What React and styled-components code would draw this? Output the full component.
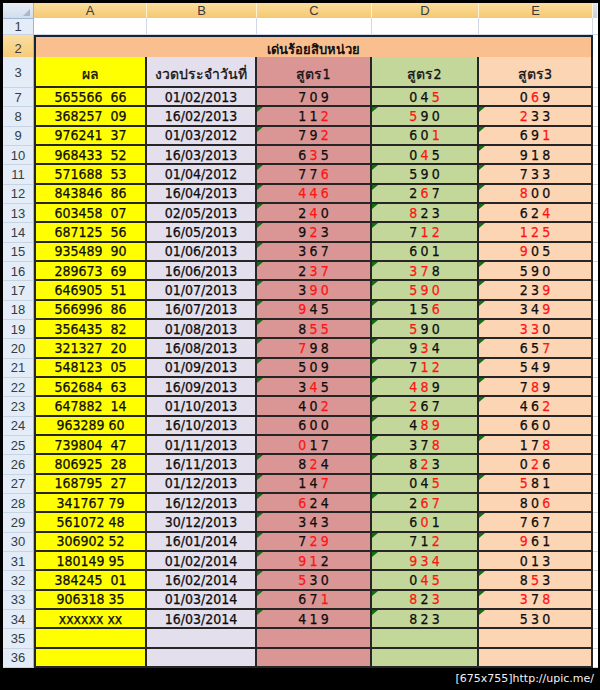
import React from "react";
import styled, { createGlobalStyle } from "styled-components";

const GlobalStyle = createGlobalStyle`
  html, body {
    margin: 0;
    padding: 0;
    background: #000;
  }
`;

const COLS = "31px 113px 110px 115px 107px 114px 5px";
const LINE = "#262626";

const colors = {
  a: "#ffff00",
  b: "#e4dfec",
  c: "#da9694",
  d: "#c4d79b",
  e: "#fcd5b4",
};

const Screen = styled.div`
  width: 600px;
  height: 690px;
  box-sizing: border-box;
  padding: 3px 2px 0 3px;
  background: #000;
  display: flex;
  flex-direction: column;
`;

const Sheet = styled.div`
  display: flex;
  flex-direction: column;
  background: #fff;
  font-family: "DejaVu Sans Condensed", "DejaVu Sans", sans-serif;
  color: #0d0d0d;
`;

const Row = styled.div`
  display: grid;
  grid-template-columns: ${COLS};
  height: ${({ $h }) => $h}px;
`;

const Corner = styled.div`
  position: relative;
  background: linear-gradient(#e6edf6, #d3deec);
  border-right: 1px solid #9eb6ce;
  border-bottom: 1px solid #9eb6ce;

  &::after {
    content: "";
    position: absolute;
    right: 3px;
    bottom: 2px;
    border-left: 7px solid transparent;
    border-bottom: 7px solid #a9b9cc;
  }
`;

const ColHead = styled.div`
  display: flex;
  align-items: center;
  justify-content: center;
  background: ${({ $off }) =>
    $off
      ? "linear-gradient(#dfe6ef, #c6d2e0)"
      : "linear-gradient(#fbdea0, #f5c870)"};
  border-right: 1px solid #fff1d2;
  border-bottom: 1px solid #e3a94b;
  font-family: "Liberation Sans", sans-serif;
  font-size: 13px;
  color: #3a3a3a;
`;

const RowHead = styled.div`
  display: flex;
  align-items: center;
  justify-content: center;
  background: ${({ $active }) =>
    $active ? "linear-gradient(#fbdea0, #f5c870)" : "#e4ecf7"};
  border-right: 1px solid #9eb6ce;
  border-bottom: 1px solid #c6d4e4;
  font-family: "Liberation Sans", sans-serif;
  font-size: 13px;
  color: #333c47;
  box-sizing: border-box;
`;

const Blank = styled.div`
  background: #fff;
  border-right: 1px solid #d0d7e5;
  border-bottom: 1px solid #d0d7e5;
`;

const Gutter = styled.div`
  background: #fff;
  border-bottom: 1px solid #d0d7e5;
`;

const Title = styled.div`
  grid-column: span 5;
  display: flex;
  align-items: center;
  justify-content: center;
  padding-top: 2px;
  box-sizing: border-box;
  background: #fabf8f;
  border: 2px solid #14243a;
  font-weight: bold;
  font-size: 13px;
  color: #111;
`;

const HeadCell = styled.div`
  display: flex;
  align-items: flex-end;
  justify-content: center;
  padding-bottom: 1px;
  box-sizing: border-box;
  background: ${({ $bg }) => $bg};
  border-right: 2px solid ${LINE};
  border-bottom: 2px solid ${LINE};
  border-left: ${({ $first }) => ($first ? `2px solid ${LINE}` : "none")};
  font-size: 14px;
  color: #111;
  -webkit-text-stroke: 0.3px #111;
`;

const Cell = styled.div`
  position: relative;
  display: flex;
  align-items: center;
  justify-content: center;
  box-sizing: border-box;
  background: ${({ $bg }) => $bg};
  border-right: 2px solid ${LINE};
  border-bottom: 2px solid ${LINE};
  border-left: ${({ $first }) => ($first ? `2px solid ${LINE}` : "none")};
  font-size: 14px;
  white-space: pre;
  -webkit-text-stroke: 0.25px currentColor;

  &::before {
    content: "";
    display: ${({ $flag }) => ($flag ? "block" : "none")};
    position: absolute;
    left: 0;
    top: 0;
    border-top: 5px solid #127012;
    border-right: 6px solid transparent;
  }
`;

const Digit = styled.span`
  margin: 0 1.6px;
  color: ${({ $red }) => ($red ? "#ff1414" : "#0d0d0d")};
`;

const Footer = styled.div`
  flex: 1;
  display: flex;
  align-items: center;
  justify-content: flex-end;
  padding-right: 4px;
  font-family: "DejaVu Sans", sans-serif;
  font-size: 11px;
  color: #f2f2f2;
`;

const rows = [
  [7, "565566  66", "01/02/2013", "709", "04*5", "0*69"],
  [8, "368257  09", "16/02/2013", "^11*2", "^*590", "^*233"],
  [9, "976241  37", "01/03/2012", "^79*2", "60*1", "^69*1"],
  [10, "968433  52", "16/03/2013", "6*35", "0*45", "^918"],
  [11, "571688  53", "01/04/2012", "^77*6", "^590", "^733"],
  [12, "843846  86", "16/04/2013", "^*4*4*6", "^2*67", "^*800"],
  [13, "603458  07", "02/05/2013", "^2*40", "^*823", "^62*4"],
  [14, "687125  56", "16/05/2013", "^9*23", "^7*1*2", "^*1*2*5"],
  [15, "935489  90", "01/06/2013", "^367", "601", "*905"],
  [16, "289673  69", "16/06/2013", "^2*3*7", "^*3*78", "^590"],
  [17, "646905  51", "01/07/2013", "^3*9*0", "^*5*9*0", "^23*9"],
  [18, "566996  86", "16/07/2013", "^*945", "^15*6", "^34*9"],
  [19, "356435  82", "01/08/2013", "^8*5*5", "^*590", "^*3*30"],
  [20, "321327  20", "16/08/2013", "^*798", "^9*34", "^65*7"],
  [21, "548123  05", "01/09/2013", "^509", "^7*1*2", "^549"],
  [22, "562684  63", "16/09/2013", "^3*45", "^*4*89", "^7*89"],
  [23, "647882  14", "01/10/2013", "40*2", "^*267", "^46*2"],
  [24, "963289 60", "16/10/2013", "600", "^4*8*9", "660"],
  [25, "739804  47", "01/11/2013", "*017", "^37*8", "^17*8"],
  [26, "806925  28", "16/11/2013", "^8*24", "^8*23", "0*26"],
  [27, "168795  27", "01/12/2013", "^14*7", "04*5", "^*581"],
  [28, "341767 79", "16/12/2013", "^*624", "^2*6*7", "80*6"],
  [29, "561072 48", "30/12/2013", "^343", "6*01", "^767"],
  [30, "306902 52", "16/01/2014", "^7*2*9", "^71*2", "^*961"],
  [31, "180149 95", "01/02/2014", "^*9*12", "^*9*3*4", "013"],
  [32, "384245  01", "16/02/2014", "^*530", "0*4*5", "^8*53"],
  [33, "906318 35", "01/03/2014", "^67*1", "^*82*3", "^*37*8"],
  [34, "xxxxxx xx", "16/03/2014", "^419", "^823", "^530"],
  [35, "", "", "", "", ""],
  [36, "", "", "", "", ""],
];

const parse = (code) => {
  const flag = code.startsWith("^");
  const digits = [];
  let red = false;
  for (const ch of code.replace("^", "")) {
    if (ch === "*") {
      red = true;
    } else {
      digits.push({ ch, red });
      red = false;
    }
  }
  return { flag, digits };
};

const Formula = ({ code, bg }) => {
  const { flag, digits } = parse(code);
  return (
    <Cell $bg={bg} $flag={flag}>
      {digits.map((d, i) => (
        <Digit key={i} $red={d.red}>
          {d.ch}
        </Digit>
      ))}
    </Cell>
  );
};

const DATA_H = 580 / 30;

export default function App() {
  return (
    <Screen>
      <GlobalStyle />
      <Sheet>
        <Row $h={15}>
          <Corner />
          <ColHead>A</ColHead>
          <ColHead>B</ColHead>
          <ColHead>C</ColHead>
          <ColHead>D</ColHead>
          <ColHead>E</ColHead>
          <ColHead $off />
        </Row>
        <Row $h={17}>
          <RowHead>1</RowHead>
          <Blank />
          <Blank />
          <Blank />
          <Blank />
          <Blank />
          <Gutter />
        </Row>
        <Row $h={22}>
          <RowHead $active>2</RowHead>
          <Title>เด่นร้อยสิบหน่วย</Title>
          <Gutter />
        </Row>
        <Row $h={31}>
          <RowHead>3</RowHead>
          <HeadCell $bg={colors.a} $first>
            ผล
          </HeadCell>
          <HeadCell $bg={colors.b}>งวดประจำวันที่</HeadCell>
          <HeadCell $bg={colors.c}>สูตร1</HeadCell>
          <HeadCell $bg={colors.d}>สูตร2</HeadCell>
          <HeadCell $bg={colors.e}>สูตร3</HeadCell>
          <Gutter />
        </Row>
        {rows.map(([n, result, date, c, d, e]) => (
          <Row key={n} $h={DATA_H}>
            <RowHead>{n}</RowHead>
            <Cell $bg={colors.a} $first>
              {result}
            </Cell>
            <Cell $bg={colors.b}>{date}</Cell>
            <Formula code={c} bg={colors.c} />
            <Formula code={d} bg={colors.d} />
            <Formula code={e} bg={colors.e} />
            <Gutter />
          </Row>
        ))}
      </Sheet>
      <Footer>[675x755]http://upic.me/</Footer>
    </Screen>
  );
}
